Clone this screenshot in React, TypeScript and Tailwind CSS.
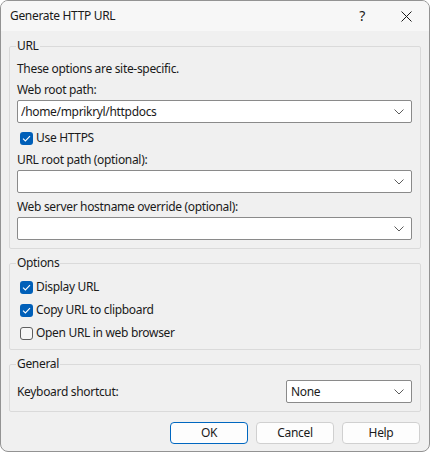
import React from "react";

const font = { fontFamily: '"Noto Sans", "Liberation Sans", sans-serif' };

function Chevron() {
  return (
    <svg width="10" height="6" viewBox="0 0 10 6" className="shrink-0">
      <path d="M0.5 0.5 L5 5 L9.5 0.5" fill="none" stroke="#5c5c5c" strokeWidth="1" />
    </svg>
  );
}

function Combo({ value, className = "" }: { value?: string; className?: string }) {
  return (
    <div
      className={`flex items-center h-[23px] bg-white border border-[#8a8a8a] rounded-[2px] pl-[3px] pr-[7px] ${className}`}
    >
      <span className="flex-1 text-[12px] leading-[16px] text-[#1a1a1a] truncate">{value}</span>
      <Chevron />
    </div>
  );
}

function Check({ checked, label }: { checked: boolean; label: string }) {
  return (
    <div className="flex items-center h-[16px] pl-[3px] gap-[3px]">
      {checked ? (
        <div className="w-[13px] h-[13px] rounded-[3px] bg-[#005fb8] flex items-center justify-center">
          <svg width="9" height="7" viewBox="0 0 9 7">
            <path d="M1 3.6 L3.4 6 L8 1.2" fill="none" stroke="#ffffff" strokeWidth="1.1" />
          </svg>
        </div>
      ) : (
        <div className="w-[13px] h-[13px] rounded-[3px] border border-[#5f5f5f] bg-[#f7f7f7]" />
      )}
      <span className="text-[12px] leading-[16px] text-[#1a1a1a]">{label}</span>
    </div>
  );
}

function Label({ children }: { children: React.ReactNode }) {
  return <div className="text-[12px] leading-[16px] text-[#1a1a1a] h-[16px]">{children}</div>;
}

function Group({ title, children, className = "" }: { title: string; children: React.ReactNode; className?: string }) {
  return (
    <fieldset className={`border border-[#dadada] rounded-[2px] pl-[7px] pr-[8px] pb-[8px] ${className}`}>
      <legend className="text-[12px] leading-[16px] text-[#1a1a1a] px-[1px] -ml-[1px]">{title}</legend>
      {children}
    </fieldset>
  );
}

function Button({ children, primary }: { children: React.ReactNode; primary?: boolean }) {
  return (
    <div
      className={`w-[78px] h-[22px] flex items-center justify-center rounded-[4px] bg-[#fdfdfd] text-[12px] leading-[16px] text-[#1a1a1a] border ${
        primary ? "border-[#0067c0]" : "border-[#d0d0d0]"
      }`}
    >
      {children}
    </div>
  );
}

export default function App() {
  return (
    <div className="w-[430px] h-[453px] bg-white tracking-[-0.32px]" style={font}>
      <div className="w-[430px] h-[452px] bg-[#f0f0f0] border border-[#939393] rounded-[8px] overflow-hidden flex flex-col">
        <div className="h-[30px] shrink-0 bg-[#f7f7f7] flex items-center pl-[9px] pr-[17px]">
          <span className="text-[12px] leading-[16px] text-[#1a1a1a]">Generate HTTP URL</span>
          <span className="ml-auto text-[14px] leading-[16px] text-[#1a1a1a] mr-[36px]">?</span>
          <svg width="11" height="11" viewBox="0 0 11 11">
            <path d="M0.5 0.5 L10.5 10.5 M10.5 0.5 L0.5 10.5" stroke="#1a1a1a" strokeWidth="1" fill="none" />
          </svg>
        </div>
        <div className="flex flex-col pl-[8px] pr-[8px]">
          <Group title="URL" className="mt-[7px]">
            <div className="flex flex-col">
              <div className="mt-[7px]">
                <Label>These options are site-specific.</Label>
              </div>
              <div className="mt-[5px]">
                <Label>Web root path:</Label>
              </div>
              <Combo value="/home/mprikryl/httpdocs" className="mt-[2px]" />
              <div className="mt-[7px]">
                <Check checked label="Use HTTPS" />
              </div>
              <div className="mt-[6px]">
                <Label>URL root path (optional):</Label>
              </div>
              <Combo className="mt-[2px]" />
              <div className="mt-[6px]">
                <Label>Web server hostname override (optional):</Label>
              </div>
              <Combo className="mt-[2px]" />
            </div>
          </Group>
          <Group title="Options" className="mt-[6px]">
            <div className="flex flex-col">
              <div className="mt-[8px]">
                <Check checked label="Display URL" />
              </div>
              <div className="mt-[7px]">
                <Check checked label="Copy URL to clipboard" />
              </div>
              <div className="mt-[7px]">
                <Check checked={false} label="Open URL in web browser" />
              </div>
            </div>
          </Group>
          <Group title="General" className="mt-[6px]">
            <div className="flex items-center mt-[8px]">
              <span className="text-[12px] leading-[16px] text-[#1a1a1a]">Keyboard shortcut:</span>
              <Combo value="None" className="ml-auto w-[126px] h-[22px] pl-[4px]" />
            </div>
          </Group>
          <div className="flex justify-end gap-[8px] mt-[10px] pr-[1px]">
            <Button primary>OK</Button>
            <Button>Cancel</Button>
            <Button>Help</Button>
          </div>
        </div>
      </div>
    </div>
  );
}
